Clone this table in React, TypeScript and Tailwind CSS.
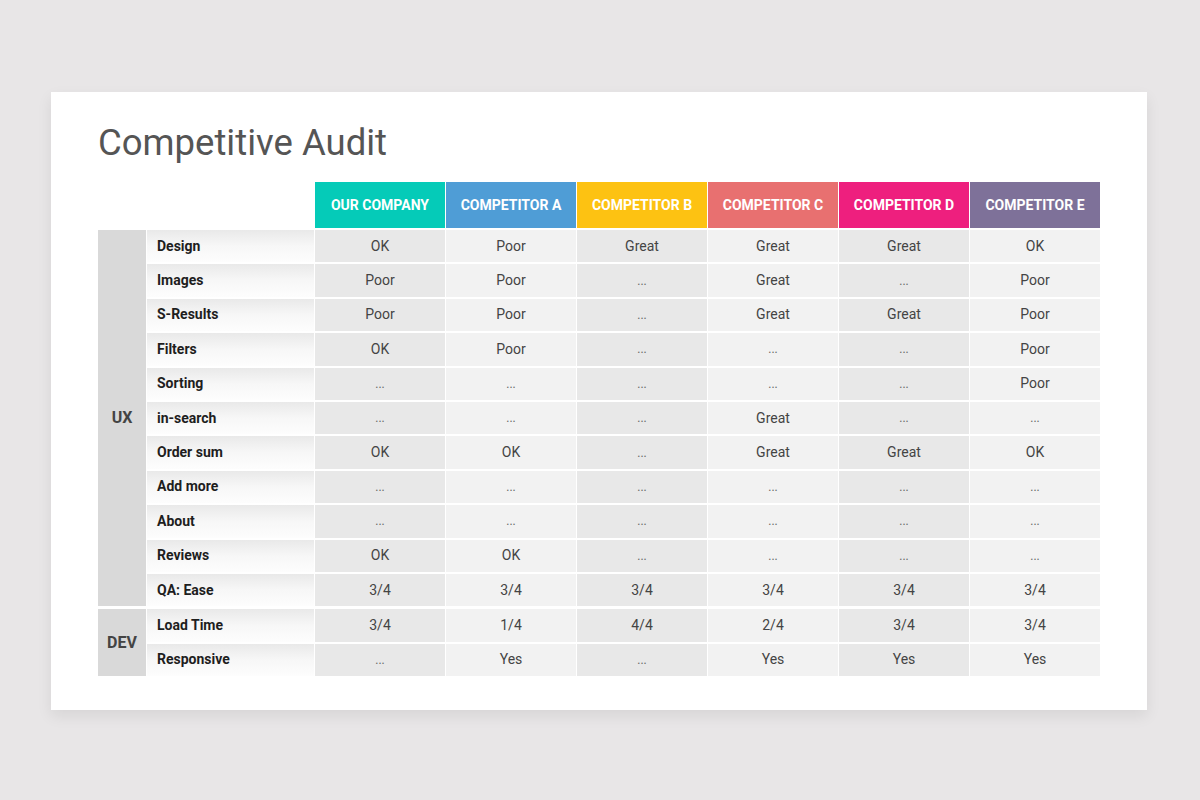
const columns = [
  { name: "OUR COMPANY", color: "bg-[#05cbb8]" },
  { name: "COMPETITOR A", color: "bg-[#4f9dd6]" },
  { name: "COMPETITOR B", color: "bg-[#fdc212]" },
  { name: "COMPETITOR C", color: "bg-[#e87070]" },
  { name: "COMPETITOR D", color: "bg-[#ee1f7e]" },
  { name: "COMPETITOR E", color: "bg-[#7e7199]" },
];

const E = "...";

const sections = [
  {
    group: "UX",
    rows: [
      { label: "Design", values: ["OK", "Poor", "Great", "Great", "Great", "OK"] },
      { label: "Images", values: ["Poor", "Poor", E, "Great", E, "Poor"] },
      { label: "S-Results", values: ["Poor", "Poor", E, "Great", "Great", "Poor"] },
      { label: "Filters", values: ["OK", "Poor", E, E, E, "Poor"] },
      { label: "Sorting", values: [E, E, E, E, E, "Poor"] },
      { label: "in-search", values: [E, E, E, "Great", E, E] },
      { label: "Order sum", values: ["OK", "OK", E, "Great", "Great", "OK"] },
      { label: "Add more", values: [E, E, E, E, E, E] },
      { label: "About", values: [E, E, E, E, E, E] },
      { label: "Reviews", values: ["OK", "OK", E, E, E, E] },
      { label: "QA: Ease", values: ["3/4", "3/4", "3/4", "3/4", "3/4", "3/4"] },
    ],
  },
  {
    group: "DEV",
    rows: [
      { label: "Load Time", values: ["3/4", "1/4", "4/4", "2/4", "3/4", "3/4"] },
      { label: "Responsive", values: [E, "Yes", E, "Yes", "Yes", "Yes"] },
    ],
  },
];

function Cell({ value, index }: { value: string; index: number }) {
  const shade = index % 2 === 0 ? "bg-[#e8e8e8]" : "bg-[#f2f2f2]";
  return (
    <div className={`flex-1 flex items-center justify-center ${shade}`}>
      {value === E ? (
        <span className="text-[12px] text-[#666] leading-none">...</span>
      ) : (
        <span className="text-[14px] text-[#444]">{value}</span>
      )}
    </div>
  );
}

export default function App() {
  return (
    <div
      className="w-full h-[800px] bg-[#e8e6e7] pt-[92px] pl-[51px] pr-[53px]"
      style={{ fontFamily: "Roboto, 'Liberation Sans', sans-serif" }}
    >
      <div className="h-[618px] bg-white px-[47px] pt-[33px] shadow-[0_6px_14px_rgba(0,0,0,0.08)]">
        <h1 className="text-[36.5px] leading-[36px] text-[#555] font-normal">
          Competitive Audit
        </h1>

        <div className="mt-[21px] flex flex-col">
          {/* header */}
          <div className="flex gap-px h-[46px]">
            <div className="w-[216px]" />
            {columns.map((c) => (
              <div
                key={c.name}
                className={`flex-1 flex items-center justify-center text-white font-bold text-[14px] ${c.color}`}
              >
                {c.name}
              </div>
            ))}
          </div>

          {sections.map((s, si) => (
            <div
              key={s.group}
              className={`flex gap-px ${si === 0 ? "mt-[2px]" : "mt-[3px]"}`}
            >
              <div className="w-[48px] bg-[#d9d9d9] flex items-center justify-center text-[16px] font-bold text-[#444]">
                {s.group}
              </div>
              <div className="flex-1 flex flex-col gap-[2px]">
                {s.rows.map((r) => (
                  <div key={r.label} className="flex gap-px h-[32.4px]">
                    <div className="w-[167px] flex items-center pl-[10px] text-[14px] font-bold text-[#1e1e1e] bg-linear-to-b from-[#e9e9e9] via-[#f7f7f7] to-[#fdfdfd]">
                      {r.label}
                    </div>
                    {r.values.map((v, i) => (
                      <Cell key={i} value={v} index={i} />
                    ))}
                  </div>
                ))}
              </div>
            </div>
          ))}
        </div>
      </div>
    </div>
  );
}
